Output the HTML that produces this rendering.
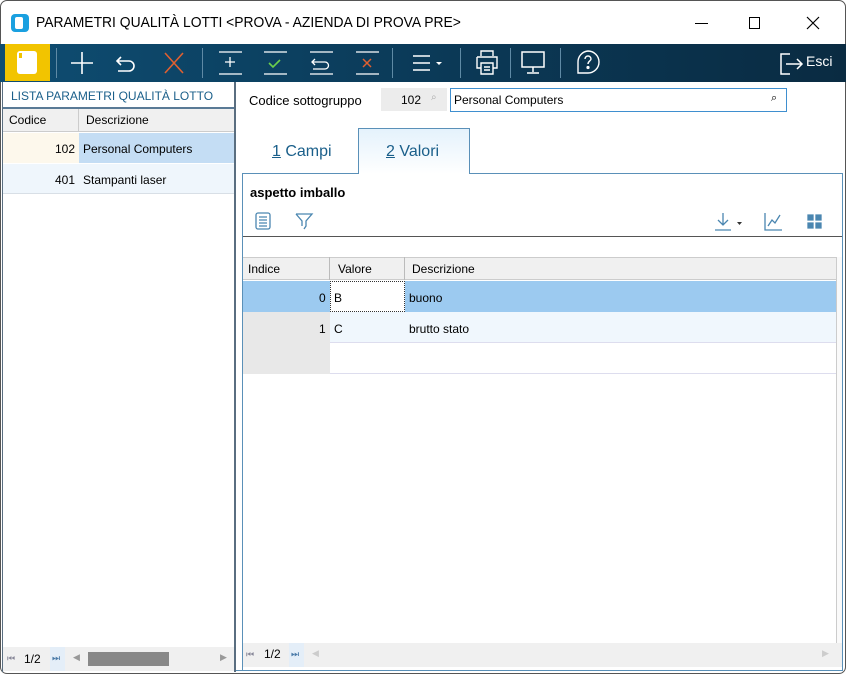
<!DOCTYPE html>
<html><head><meta charset="utf-8"><style>
*{box-sizing:border-box;margin:0;padding:0}
body{width:846px;height:674px;background:#fff;font-family:"Liberation Sans",sans-serif;font-size:12px;color:#000;position:relative;overflow:hidden}
.a{position:absolute}
.win{left:0;top:0;width:846px;height:674px;border:1px solid #555;border-radius:7px;overflow:hidden}
.tb{left:0;top:44px;width:846px;height:38px;background:linear-gradient(90deg,#0e4d72,#0b3a58 50%,#0a2b42)}
.sep{top:48px;width:1px;height:30px;background:#5f8aa5}
.t{white-space:nowrap}
svg{position:absolute}
</style></head><body>
<div class="a win"></div>
<!-- title -->
<div class="a" style="left:11px;top:14px;width:18px;height:18px;border-radius:4px;background:#1aa0e0"></div>
<div class="a" style="left:15px;top:17px;width:8px;height:12px;border-radius:2px;background:#fff"></div>
<div class="a t" style="left:36px;top:14px;font-size:15px;transform:scaleX(0.925);transform-origin:0 0">PARAMETRI QUALITÀ LOTTI &lt;PROVA - AZIENDA DI PROVA PRE&gt;</div>
<div class="a" style="left:695px;top:23px;width:13px;height:1px;background:#000"></div>
<div class="a" style="left:749px;top:17px;width:11px;height:12px;border:1px solid #000"></div>
<svg style="left:806px;top:16px" width="14" height="14"><path d="M1 1L13 13M13 1L1 13" stroke="#000" stroke-width="1.2"/></svg>
<!-- toolbar -->
<div class="a tb"></div>
<div class="a" style="left:5px;top:44px;width:45px;height:37px;background:#f2c400"></div>
<div class="a" style="left:17px;top:51px;width:20px;height:23px;border-radius:3px;background:#fff"></div>
<div class="a" style="left:19px;top:53px;width:3px;height:5px;background:#f2c400"></div>
<div class="a sep" style="left:56px"></div><div class="a sep" style="left:202px"></div><div class="a sep" style="left:392px"></div><div class="a sep" style="left:460px"></div><div class="a sep" style="left:510px"></div><div class="a sep" style="left:560px"></div>
<svg style="left:0;top:44px" width="846" height="38" fill="none" stroke="#fff" stroke-width="1.6">
<path d="M82 8V30M71 19H93"/>
<path d="M121 13l-4 4 4 4M117 17h12a5 5 0 010 10h-11"/>
<path d="M165 9l18 20M183 9L165 29" stroke="#e06030"/>
<path d="M219 8h23M219 30h23M230 13v10M225 18h10" stroke-width="1.3"/>
<path d="M264 8h23M264 30h23" stroke-width="1.3"/><path d="M269 19l4 4 7-7" stroke="#6cd04c"/>
<path d="M310 8h23M310 30h23M315 15l-3 3 3 3M312 18h13a3.5 3.5 0 010 7h-12" stroke-width="1.3"/>
<path d="M356 8h23M356 30h23" stroke-width="1.3"/><path d="M363 15l8 8M371 15l-8 8" stroke="#e06030" stroke-width="1.5"/>
<path d="M413 12h17M413 19h17M413 26h17"/><path d="M436 18h6l-3 3z" fill="#fff" stroke="none"/>
<path d="M481 12V7h12v5M477 13h20v11h-4M481 24h-4V13M481 19h12v11h-12zM484 23h6M484 26h6" stroke-width="1.4"/>
<path d="M522 8h22v15h-22zM533 23v5M527 29h12" stroke-width="1.5"/>
<path d="M588 7a11 11 0 110 22h-10v-11a11 11 0 0110-11z" stroke-width="1.4"/><path d="M585 15a3 3 0 116 0c0 2-3 2-3 5" stroke-width="1.4"/><circle cx="588" cy="23.5" r="0.8" fill="#fff"/>
<path d="M790 10h-9v20h9M786 20h16M797 15l5 5-5 5" stroke-width="1.5"/>
</svg>
<div class="a t" style="left:806px;top:53px;font-size:14px;color:#fff">Esci</div>
<!-- left panel -->
<div class="a" style="left:234px;top:82px;width:2px;height:590px;background:#5a6e80"></div>
<div class="a" style="left:2px;top:82px;width:1px;height:590px;background:#5a6e80"></div>
<div class="a t" style="left:11px;top:89px;font-size:12px;color:#1a5f8a">LISTA PARAMETRI QUALITÀ LOTTO</div>
<div class="a" style="left:3px;top:107px;width:231px;height:2px;background:#5a7a96"></div>
<div class="a" style="left:3px;top:109px;width:231px;height:23px;background:#f0f0f0;border-bottom:1px solid #ccc"></div>
<div class="a" style="left:78px;top:109px;width:1px;height:23px;background:#ccc"></div>
<div class="a t" style="left:9px;top:113px">Codice</div><div class="a t" style="left:86px;top:113px">Descrizione</div>
<div class="a" style="left:3px;top:133px;width:76px;height:30px;background:#fdf8ec"></div>
<div class="a" style="left:79px;top:133px;width:155px;height:30px;background:#c4ddf4"></div>
<div class="a t" style="left:55px;top:142px">102</div><div class="a t" style="left:83px;top:142px">Personal Computers</div>
<div class="a" style="left:3px;top:164px;width:231px;height:30px;background:#eff6fc;border-bottom:1px solid #d8dfe6"></div>
<div class="a t" style="left:55px;top:173px">401</div><div class="a t" style="left:83px;top:173px">Stampanti laser</div>
<div class="a" style="left:3px;top:647px;width:231px;height:24px;background:#f0f0f0"></div>
<div class="a t" style="left:7px;top:653px;font-size:9px;color:#889">⏮</div>
<div class="a t" style="left:24px;top:652px">1/2</div>
<div class="a" style="left:50px;top:647px;width:15px;height:24px;background:#e4eef8"></div>
<div class="a t" style="left:52px;top:653px;font-size:9px;color:#4a7aa8">⏭</div>
<div class="a t" style="left:73px;top:652px;font-size:9px;color:#999">◀</div>
<div class="a" style="left:88px;top:652px;width:81px;height:14px;background:#888"></div>
<div class="a t" style="left:220px;top:652px;font-size:9px;color:#999">▶</div>
<!-- right header -->
<div class="a t" style="left:249px;top:93px;font-size:13px">Codice sottogruppo</div>
<div class="a" style="left:381px;top:88px;width:66px;height:23px;background:#ececec"></div>
<div class="a t" style="left:401px;top:93px">102</div>
<div class="a t" style="left:431px;top:92px;font-size:10px;color:#aaa">⌕</div>
<div class="a" style="left:450px;top:88px;width:337px;height:24px;border:1px solid #3f8fcf"></div>
<div class="a t" style="left:454px;top:93px">Personal Computers</div>
<div class="a t" style="left:771px;top:92px;font-size:11px">⌕</div>
<!-- tabs -->
<div class="a t" style="left:272px;top:143px;font-size:16px;color:#1a5f8a"><u>1</u> Campi</div>
<div class="a" style="left:358px;top:128px;width:112px;height:46px;border:1px solid #5a90b8;border-bottom:none;background:linear-gradient(#e4f2fc,#fff)"></div>
<div class="a t" style="left:386px;top:143px;font-size:16px;color:#1a5f8a"><u>2</u> Valori</div>
<div class="a" style="left:242px;top:173px;width:116px;height:1px;background:#5a90b8"></div>
<div class="a" style="left:470px;top:173px;width:373px;height:1px;background:#5a90b8"></div>
<div class="a" style="left:242px;top:173px;width:1px;height:498px;background:#5a90b8"></div>
<div class="a" style="left:842px;top:173px;width:1px;height:498px;background:#5a90b8"></div>
<div class="a t" style="left:250px;top:185px;font-size:13px;font-weight:bold">aspetto imballo</div>
<svg style="left:250px;top:210px" width="590" height="26" fill="none" stroke="#4a86b0" stroke-width="1.3">
<rect x="6" y="3" width="14" height="16" rx="2"/><path d="M9 7h8M9 10h8M9 13h8M9 16h8"/>
<path d="M46 4h16l-6 7v5l-2 3M46 4l6 7v5"/>
<path d="M473 3v12M468 10l5 5 5-5M465 20h16"/><path d="M487 12h5l-2.5 3z" fill="#333" stroke="none"/>
<path d="M515 3v17h17M518 16l4-6 3 3 5-8"/>
<path d="M558 5h5v5h-5zM566 5h5v5h-5zM558 13h5v5h-5zM566 13h5v5h-5z" fill="#4a86b0"/>
</svg>
<div class="a" style="left:243px;top:236px;width:599px;height:1px;background:#555"></div>
<!-- grid -->
<div class="a" style="left:243px;top:257px;width:593px;height:23px;background:#f0f0f0;border-top:1px solid #ccc;border-bottom:1px solid #ccc"></div>
<div class="a" style="left:329px;top:257px;width:1px;height:23px;background:#bbb"></div>
<div class="a" style="left:404px;top:257px;width:1px;height:23px;background:#bbb"></div>
<div class="a t" style="left:248px;top:262px">Indice</div><div class="a t" style="left:338px;top:262px">Valore</div><div class="a t" style="left:412px;top:262px">Descrizione</div>
<div class="a" style="left:836px;top:257px;width:6px;height:386px;background:#fafafa;border-left:1px solid #ccc"></div>
<div class="a" style="left:243px;top:281px;width:593px;height:31px;background:#9ccaf0"></div>
<div class="a" style="left:330px;top:281px;width:75px;height:31px;background:#fff;border:1px dotted #333"></div>
<div class="a t" style="left:319px;top:291px">0</div><div class="a t" style="left:334px;top:291px">B</div><div class="a t" style="left:409px;top:291px">buono</div>
<div class="a" style="left:243px;top:312px;width:87px;height:62px;background:#e8e8e8"></div>
<div class="a" style="left:330px;top:312px;width:506px;height:31px;background:#f0f7fd;border-bottom:1px solid #dde"></div>
<div class="a" style="left:330px;top:373px;width:506px;height:1px;background:#dde"></div>
<div class="a t" style="left:319px;top:322px">1</div><div class="a t" style="left:334px;top:322px">C</div><div class="a t" style="left:409px;top:322px">brutto stato</div>
<div class="a" style="left:243px;top:643px;width:599px;height:24px;background:#f0f0f0"></div>
<div class="a t" style="left:246px;top:649px;font-size:9px;color:#889">⏮</div>
<div class="a t" style="left:264px;top:647px">1/2</div>
<div class="a" style="left:289px;top:643px;width:15px;height:24px;background:#e4eef8"></div>
<div class="a t" style="left:291px;top:649px;font-size:9px;color:#4a7aa8">⏭</div>
<div class="a t" style="left:312px;top:648px;font-size:9px;color:#ccc">◀</div>
<div class="a t" style="left:822px;top:648px;font-size:9px;color:#ccc">▶</div>
<div class="a" style="left:236px;top:670px;width:607px;height:1px;background:#5a90b8"></div>
</body></html>
